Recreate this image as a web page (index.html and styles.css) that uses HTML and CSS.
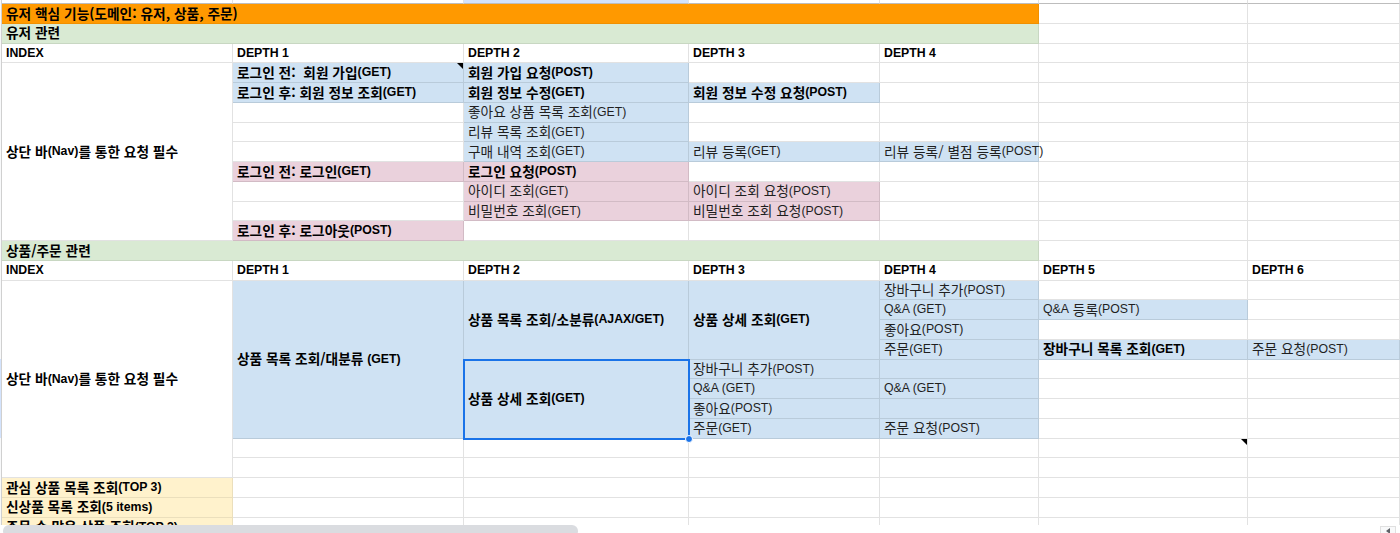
FILE: index.html
```html
<!DOCTYPE html>
<html lang="ko">
<head>
<meta charset="utf-8">
<title>유저 핵심 기능</title>
<link rel="stylesheet" href="styles.css">
</head>
<body>
<div class="sheet">
  <div class="grid">
    <div class="strip"></div>

    <!-- partial top row -->
    <div class="c top"></div><div class="c top"></div><div class="c top hl"></div><div class="c top"></div><div class="c top"></div><div class="c top"></div><div class="c top"></div>

    <!-- title -->
    <div class="c s5 or b"><span class="k">유저 핵심 기능(도메인: 유저, 상품, 주문)</span></div><div class="c"></div><div class="c"></div>
    <div class="c s5 gr b"><span class="k">유저 관련</span></div><div class="c"></div><div class="c"></div>
    <div class="c b">INDEX</div><div class="c b">DEPTH 1</div><div class="c b">DEPTH 2</div><div class="c b">DEPTH 3</div><div class="c b">DEPTH 4</div><div class="c"></div><div class="c"></div>

    <!-- user section -->
    <div class="c r9 b"><span class="k">상단 바</span>(Nav)<span class="k">를 통한 요청 필수</span></div>
    <div class="c bl b note"><span class="k">로그인 전:&nbsp; 회원 가입</span>(GET)<i class="tri"></i></div><div class="c bl b"><span class="k">회원 가입 요청</span>(POST)</div><div class="c"></div><div class="c"></div><div class="c"></div><div class="c"></div>
    <div class="c bl b"><span class="k">로그인 후: 회원 정보 조회</span>(GET)</div><div class="c bl b"><span class="k">회원 정보 수정</span>(GET)</div><div class="c bl b"><span class="k">회원 정보 수정 요청</span>(POST)</div><div class="c"></div><div class="c"></div><div class="c"></div>
    <div class="c"></div><div class="c bl"><span class="k">좋아요 상품 목록 조회</span>(GET)</div><div class="c"></div><div class="c"></div><div class="c"></div><div class="c"></div>
    <div class="c"></div><div class="c bl"><span class="k">리뷰 목록 조회</span>(GET)</div><div class="c"></div><div class="c"></div><div class="c"></div><div class="c"></div>
    <div class="c"></div><div class="c bl"><span class="k">구매 내역 조회</span>(GET)</div><div class="c bl"><span class="k">리뷰 등록</span>(GET)</div><div class="c bl over"><span class="k">리뷰 등록/ 별점 등록</span>(POST)</div><div class="c"></div><div class="c"></div>
    <div class="c pk b"><span class="k">로그인 전: 로그인</span>(GET)</div><div class="c pk b"><span class="k">로그인 요청</span>(POST)</div><div class="c"></div><div class="c"></div><div class="c"></div><div class="c"></div>
    <div class="c"></div><div class="c pk"><span class="k">아이디 조회</span>(GET)</div><div class="c pk"><span class="k">아이디 조회 요청</span>(POST)</div><div class="c"></div><div class="c"></div><div class="c"></div>
    <div class="c"></div><div class="c pk"><span class="k">비밀번호 조회</span>(GET)</div><div class="c pk"><span class="k">비밀번호 조회 요청</span>(POST)</div><div class="c"></div><div class="c"></div><div class="c"></div>
    <div class="c pk b"><span class="k">로그인 후: 로그아웃</span>(POST)</div><div class="c"></div><div class="c"></div><div class="c"></div><div class="c"></div><div class="c"></div>

    <!-- product section -->
    <div class="c s5 gr b"><span class="k">상품/주문 관련</span></div><div class="c"></div><div class="c"></div>
    <div class="c b">INDEX</div><div class="c b">DEPTH 1</div><div class="c b">DEPTH 2</div><div class="c b">DEPTH 3</div><div class="c b">DEPTH 4</div><div class="c b">DEPTH 5</div><div class="c b">DEPTH 6</div>

    <div class="c r10 b"><span class="k">상단 바</span>(Nav)<span class="k">를 통한 요청 필수</span></div>
    <div class="c r8 bl b"><span class="k">상품 목록 조회/대분류 </span>(GET)</div>
    <div class="c r4 bl b"><span class="k">상품 목록 조회/소분류</span>(AJAX/GET)</div>
    <div class="c r4 bl b"><span class="k">상품 상세 조회</span>(GET)</div>
    <div class="c bl"><span class="k">장바구니 추가</span>(POST)</div><div class="c"></div><div class="c"></div>
    <div class="c bl">Q&amp;A (GET)</div><div class="c bl">Q&amp;A<span class="k"> 등록</span>(POST)</div><div class="c"></div>
    <div class="c bl"><span class="k">좋아요</span>(POST)</div><div class="c"></div><div class="c"></div>
    <div class="c bl"><span class="k">주문</span>(GET)</div><div class="c bl b"><span class="k">장바구니 목록 조회</span>(GET)</div><div class="c bl"><span class="k">주문 요청</span>(POST)</div>

    <div class="c r4 bl b sel"><span class="k">상품 상세 조회</span>(GET)<i class="handle"></i></div>
    <div class="c bl"><span class="k">장바구니 추가</span>(POST)</div><div class="c bl"></div><div class="c"></div><div class="c"></div>
    <div class="c bl">Q&amp;A (GET)</div><div class="c bl">Q&amp;A (GET)</div><div class="c"></div><div class="c"></div>
    <div class="c bl"><span class="k">좋아요</span>(POST)</div><div class="c bl"></div><div class="c"></div><div class="c"></div>
    <div class="c bl"><span class="k">주문</span>(GET)</div><div class="c bl"><span class="k">주문 요청</span>(POST)</div><div class="c"></div><div class="c"></div>

    <div class="c"></div><div class="c"></div><div class="c"></div><div class="c"></div><div class="c note"><i class="tri"></i></div><div class="c"></div>
    <div class="c"></div><div class="c"></div><div class="c"></div><div class="c"></div><div class="c"></div><div class="c"></div>

    <!-- yellow rows -->
    <div class="c ye b"><span class="k">관심 상품 목록 조회</span>(TOP 3)</div><div class="c"></div><div class="c"></div><div class="c"></div><div class="c"></div><div class="c"></div><div class="c"></div>
    <div class="c ye b"><span class="k">신상품 목록 조회</span>(5 items)</div><div class="c"></div><div class="c"></div><div class="c"></div><div class="c"></div><div class="c"></div><div class="c"></div>
    <div class="c ye b"><span class="k">주문 수 많은 상품 조회</span>(TOP 3)</div><div class="c"></div><div class="c"></div><div class="c"></div><div class="c"></div><div class="c"></div><div class="c"></div>
  </div>
</div>
<div class="hbar">
  <div class="thumb"></div>
  <div class="arrow"><i></i></div>
</div>
</body>
</html>
```

FILE: styles.css
```css
* { box-sizing: border-box; }

html, body {
  margin: 0;
  height: 533px;
  overflow: hidden;
  background: #fff;
}

body {
  font-family: "Liberation Sans", "Noto Sans CJK KR", Arial, sans-serif;
  font-size: 12.3px;
  color: #000;
}

.sheet {
  height: 525px;
  overflow: hidden;
}

.grid {
  display: grid;
  grid-template-columns: 2px 231px 231px 225px 191px 159px 209px 1fr;
  grid-template-rows: 4px repeat(27, 19.75px);
}

.strip {
  grid-column: 1;
  grid-row: 1 / span 28;
  border-right: 1px solid #d0d0d0;
  background: linear-gradient(to bottom, #f8f9fa 0 359px, #d3e3fd 359px 438px, #f8f9fa 438px);
}

.c {
  display: flex;
  align-items: center;
  min-width: 0;
  padding: 0 4px;
  white-space: nowrap;
  line-height: 1;
  border-right: 1px solid #e2e2e2;
  border-bottom: 1px solid #e2e2e2;
  color: #1f1f1f;
}

.k {
  font-family: "Noto Sans CJK KR", "Liberation Sans", sans-serif;
  font-size: 13.7px;
  line-height: 1;
  white-space: pre;
}

.b { font-weight: 700; color: #000; }

.top { border-bottom-color: #bdbdbd; }
.hl { background: #d3e3fd; }

.or { background: #ff9900; border-color: rgba(0, 0, 0, 0.06); }
.gr { background: #d9ead3; border-color: rgba(0, 0, 0, 0.08); }
.bl { background: #cfe2f3; border-color: rgba(0, 0, 0, 0.1); }
.pk { background: #ead1dc; border-color: rgba(0, 0, 0, 0.1); }
.ye { background: #fff2cc; border-color: rgba(0, 0, 0, 0.08); }

.s5 { grid-column: span 5; }
.r4 { grid-row: span 4; }
.r8 { grid-row: span 8; }
.r9 { grid-row: span 9; }
.r10 { grid-row: span 10; }

.over { z-index: 1; }

.note { position: relative; }

.tri {
  position: absolute;
  top: 0;
  right: 0;
  width: 0;
  height: 0;
  border-left: 6px solid transparent;
  border-top: 6px solid #000;
}

.sel {
  position: relative;
  outline: 2px solid #1a73e8;
  outline-offset: -1px;
  z-index: 2;
}

.handle {
  position: absolute;
  right: -5px;
  bottom: -5px;
  width: 8px;
  height: 8px;
  border-radius: 50%;
  background: #1a73e8;
  border: 1px solid #fff;
}

.hbar {
  display: flex;
  align-items: flex-start;
  height: 8px;
  padding-left: 3px;
  overflow: hidden;
  background: #fff;
}

.thumb {
  width: 575px;
  height: 12px;
  border-radius: 6px;
  background: #dadce0;
}

.arrow {
  margin-left: auto;
  margin-right: 4px;
  width: 16px;
  height: 10px;
  margin-top: 1px;
  border: 1px solid #e0e0e0;
  background: #f8f9fa;
  display: flex;
  align-items: center;
  justify-content: center;
}

.arrow i {
  width: 0;
  height: 0;
  border-top: 3px solid transparent;
  border-bottom: 3px solid transparent;
  border-right: 4px solid #5f6368;
}
```
